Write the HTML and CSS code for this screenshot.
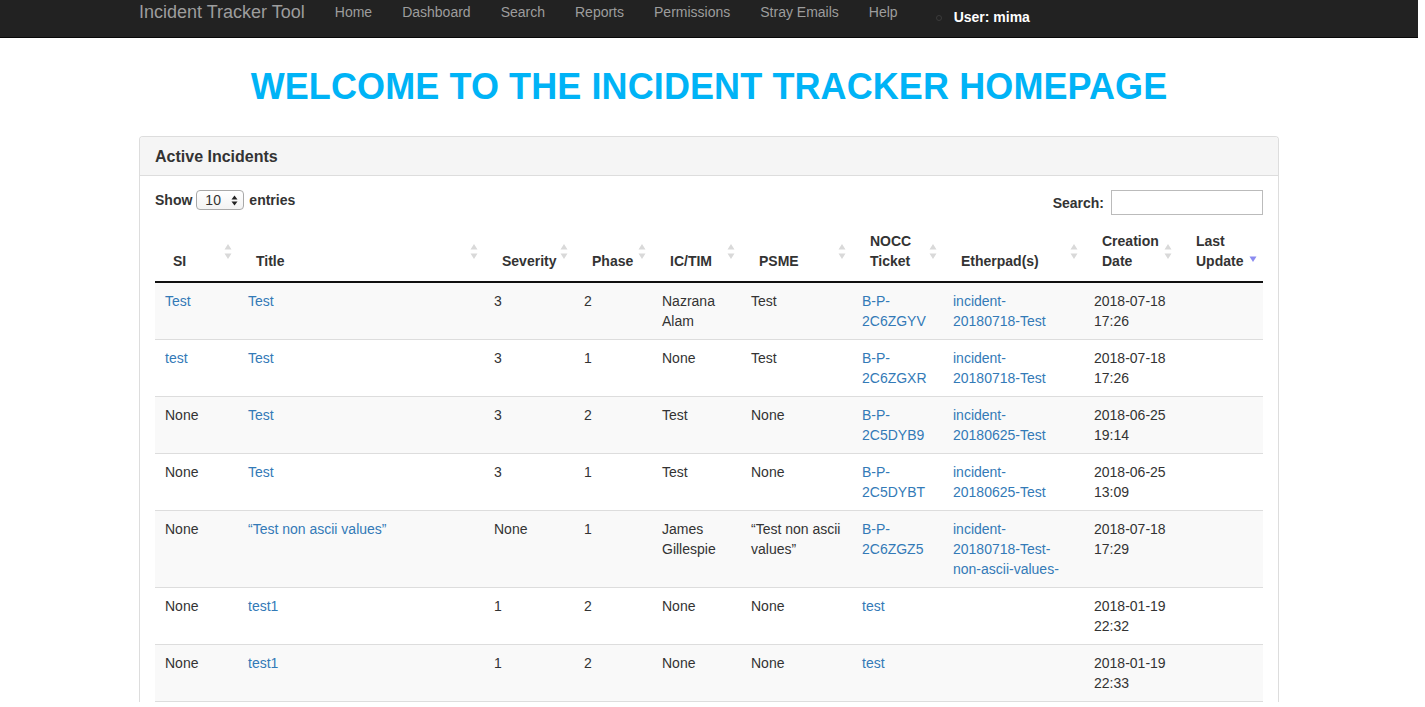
FILE: index.html
```html
<!DOCTYPE html>
<html lang="en">
<head>
<meta charset="utf-8">
<title>Incident Tracker Tool</title>
<link rel="stylesheet" href="styles.css">
</head>
<body>
<nav class="navbar">
  <div class="nav-inner">
    <a class="brand" href="#">Incident Tracker Tool</a>
    <ul class="nav-links">
      <li><a href="#">Home</a></li>
      <li><a href="#">Dashboard</a></li>
      <li><a href="#">Search</a></li>
      <li><a href="#">Reports</a></li>
      <li><a href="#">Permissions</a></li>
      <li><a href="#">Stray Emails</a></li>
      <li><a href="#">Help</a></li>
    </ul>
    <div class="user"><span class="user-dot"></span><span class="user-name">User: mima</span></div>
  </div>
</nav>

<h1 class="page-title">WELCOME TO THE INCIDENT TRACKER HOMEPAGE</h1>

<div class="panel">
  <div class="panel-heading"><h3 class="panel-title">Active Incidents</h3></div>
  <div class="panel-body">
    <div class="controls">
      <div class="length">
        <span>Show</span>
        <span class="select-box"><span class="select-val">10</span>
          <svg class="select-arrows" width="7" height="11" viewBox="0 0 7 11"><path d="M3.5 0.5 L6.5 4.5 H0.5Z M3.5 10.5 L6.5 6.5 H0.5Z" fill="#222"/></svg>
        </span>
        <span>entries</span>
      </div>
      <div class="filter">
        <span>Search:</span>
        <span class="search-input"></span>
      </div>
    </div>

    <table class="incidents">
      <colgroup>
        <col class="c-si"><col class="c-title"><col class="c-sev"><col class="c-phase"><col class="c-ic"><col class="c-psme"><col class="c-nocc"><col class="c-ether"><col class="c-created"><col class="c-updated">
      </colgroup>
      <thead>
        <tr>
          <th>SI<svg class="sort" width="8" height="19" viewBox="0 0 8 19"><path d="M4 2 L7.5 7.5 H0.5Z M4 17 L7.5 11.5 H0.5Z"/></svg></th>
          <th>Title<svg class="sort" width="8" height="19" viewBox="0 0 8 19"><path d="M4 2 L7.5 7.5 H0.5Z M4 17 L7.5 11.5 H0.5Z"/></svg></th>
          <th>Severity<svg class="sort" width="8" height="19" viewBox="0 0 8 19"><path d="M4 2 L7.5 7.5 H0.5Z M4 17 L7.5 11.5 H0.5Z"/></svg></th>
          <th>Phase<svg class="sort" width="8" height="19" viewBox="0 0 8 19"><path d="M4 2 L7.5 7.5 H0.5Z M4 17 L7.5 11.5 H0.5Z"/></svg></th>
          <th>IC/TIM<svg class="sort" width="8" height="19" viewBox="0 0 8 19"><path d="M4 2 L7.5 7.5 H0.5Z M4 17 L7.5 11.5 H0.5Z"/></svg></th>
          <th>PSME<svg class="sort" width="8" height="19" viewBox="0 0 8 19"><path d="M4 2 L7.5 7.5 H0.5Z M4 17 L7.5 11.5 H0.5Z"/></svg></th>
          <th>NOCC Ticket<svg class="sort" width="8" height="19" viewBox="0 0 8 19"><path d="M4 2 L7.5 7.5 H0.5Z M4 17 L7.5 11.5 H0.5Z"/></svg></th>
          <th>Etherpad(s)<svg class="sort" width="8" height="19" viewBox="0 0 8 19"><path d="M4 2 L7.5 7.5 H0.5Z M4 17 L7.5 11.5 H0.5Z"/></svg></th>
          <th>Creation Date<svg class="sort" width="8" height="19" viewBox="0 0 8 19"><path d="M4 2 L7.5 7.5 H0.5Z M4 17 L7.5 11.5 H0.5Z"/></svg></th>
          <th>Last Update<svg class="sort sort-desc" width="8" height="19" viewBox="0 0 8 19"><path d="M4 17 L7.5 11.5 H0.5Z"/></svg></th>
        </tr>
      </thead>
      <tbody>
        <tr>
          <td><a href="#">Test</a></td>
          <td><a href="#">Test</a></td>
          <td>3</td>
          <td>2</td>
          <td>Nazrana Alam</td>
          <td>Test</td>
          <td><a href="#">B-P-<wbr>2C6ZGYV</a></td>
          <td class="ether"><a href="#">incident-<wbr>20180718-Test</a></td>
          <td>2018-07-18 17:26</td>
          <td></td>
        </tr>
        <tr>
          <td><a href="#">test</a></td>
          <td><a href="#">Test</a></td>
          <td>3</td>
          <td>1</td>
          <td>None</td>
          <td>Test</td>
          <td><a href="#">B-P-<wbr>2C6ZGXR</a></td>
          <td class="ether"><a href="#">incident-<wbr>20180718-Test</a></td>
          <td>2018-07-18 17:26</td>
          <td></td>
        </tr>
        <tr>
          <td>None</td>
          <td><a href="#">Test</a></td>
          <td>3</td>
          <td>2</td>
          <td>Test</td>
          <td>None</td>
          <td><a href="#">B-P-<wbr>2C5DYB9</a></td>
          <td class="ether"><a href="#">incident-<wbr>20180625-Test</a></td>
          <td>2018-06-25 19:14</td>
          <td></td>
        </tr>
        <tr>
          <td>None</td>
          <td><a href="#">Test</a></td>
          <td>3</td>
          <td>1</td>
          <td>Test</td>
          <td>None</td>
          <td><a href="#">B-P-<wbr>2C5DYBT</a></td>
          <td class="ether"><a href="#">incident-<wbr>20180625-Test</a></td>
          <td>2018-06-25 13:09</td>
          <td></td>
        </tr>
        <tr>
          <td>None</td>
          <td><a href="#">“Test non ascii values”</a></td>
          <td>None</td>
          <td>1</td>
          <td>James Gillespie</td>
          <td>“Test non ascii values”</td>
          <td><a href="#">B-P-<wbr>2C6ZGZ5</a></td>
          <td class="ether"><a href="#">incident-<wbr>20180718-Test-<wbr>non-ascii-values-</a></td>
          <td>2018-07-18 17:29</td>
          <td></td>
        </tr>
        <tr>
          <td>None</td>
          <td><a href="#">test1</a></td>
          <td>1</td>
          <td>2</td>
          <td>None</td>
          <td>None</td>
          <td><a href="#">test</a></td>
          <td class="ether"></td>
          <td>2018-01-19 22:32</td>
          <td></td>
        </tr>
        <tr>
          <td>None</td>
          <td><a href="#">test1</a></td>
          <td>1</td>
          <td>2</td>
          <td>None</td>
          <td>None</td>
          <td><a href="#">test</a></td>
          <td class="ether"></td>
          <td>2018-01-19 22:33</td>
          <td></td>
        </tr>
      </tbody>
    </table>
  </div>
</div>
</body>
</html>
```
FILE: styles.css
```css
html, body {
  margin: 0;
  background: #fff;
}
body {
  padding: 0 7px 0 0;
  font-family: "Liberation Sans", Arial, sans-serif;
  font-size: 14px;
  line-height: 20px;
  color: #333;
}
a {
  color: #337ab7;
  text-decoration: none;
}

/* navbar */
.navbar {
  background: #222;
  border-bottom: 1px solid #080808;
  height: 37px;
}
.nav-inner {
  width: 1140px;
  margin: 0 auto;
  display: flex;
  align-items: flex-start;
}
.brand {
  font-size: 18px;
  line-height: 20px;
  color: #9d9d9d;
  padding: 2px 15px 0 0;
}
.nav-links {
  list-style: none;
  margin: 0;
  padding: 0;
  display: flex;
}
.nav-links a {
  display: block;
  padding: 2px 15px 0;
  line-height: 20px;
  color: #9d9d9d;
}
.user {
  display: flex;
  align-items: center;
  margin-left: 23px;
  padding-top: 7px;
}
.user-dot {
  width: 4px;
  height: 4px;
  border: 1px solid #3a3a3a;
  border-radius: 50%;
  margin-right: 12px;
  margin-top: 2px;
}
.user-name {
  color: #fff;
  font-weight: bold;
  line-height: 20px;
}

/* heading */
.page-title {
  margin: 29px 0;
  text-align: center;
  font-size: 36px;
  line-height: 40px;
  font-weight: bold;
  letter-spacing: 0.1px;
  color: #00b3f6;
}

/* panel */
.panel {
  box-sizing: border-box;
  width: 1140px;
  margin: 0 auto;
  border: 1px solid #ddd;
  border-bottom: none;
  border-radius: 4px 4px 0 0;
}
.panel-heading {
  background: #f5f5f5;
  border-bottom: 1px solid #ddd;
  border-radius: 3px 3px 0 0;
  padding: 11px 15px 9px;
}
.panel-title {
  margin: 0;
  font-size: 16px;
  line-height: 18px;
  font-weight: bold;
  color: #333;
}
.panel-body {
  padding: 14px 15px 0;
}

/* datatable controls */
.controls {
  display: flex;
  justify-content: space-between;
  align-items: flex-start;
  height: 25px;
  font-weight: bold;
}
.length {
  display: flex;
  align-items: center;
  gap: 4px;
  height: 20px;
}
.select-box {
  box-sizing: border-box;
  width: 48px;
  height: 20px;
  border: 1px solid #a9a9a9;
  border-radius: 4px;
  background: linear-gradient(#fff, #f3f3f3);
  display: flex;
  align-items: center;
  justify-content: space-between;
  padding: 0 5px 0 8px;
  font-weight: normal;
  margin-right: 1px;
}
.select-val {
  line-height: 18px;
}
.filter {
  display: flex;
  align-items: center;
  gap: 7px;
  height: 25px;
}
.search-input {
  box-sizing: border-box;
  width: 152px;
  height: 25px;
  border: 1px solid #bbb;
  background: #fff;
}

/* table */
.incidents {
  width: 100%;
  margin-top: 6px;
  table-layout: fixed;
  border-collapse: collapse;
}
.c-si { width: 83px; }
.c-title { width: 246px; }
.c-sev { width: 90px; }
.c-phase { width: 78px; }
.c-ic { width: 89px; }
.c-psme { width: 111px; }
.c-nocc { width: 91px; }
.c-ether { width: 141px; }
.c-created { width: 94px; }
.c-updated { width: 85px; }

.incidents th {
  position: relative;
  padding: 10px 18px;
  text-align: left;
  vertical-align: bottom;
  font-weight: bold;
  line-height: 20px;
  border-bottom: 2px solid #111;
}
.sort {
  position: absolute;
  right: 6px;
  top: 50%;
  margin-top: -9px;
  fill: #d9d9d9;
}
.sort-desc {
  fill: #8b8bf0;
  right: 6px;
  margin-top: -6px;
}
.incidents td {
  padding: 8px 10px;
  vertical-align: top;
  border-bottom: 1px solid #ddd;
  line-height: 20px;
}
.incidents td.ether {
  padding-right: 14px;
}
.incidents tbody tr:nth-child(odd) {
  background: #f9f9f9;
}
```
